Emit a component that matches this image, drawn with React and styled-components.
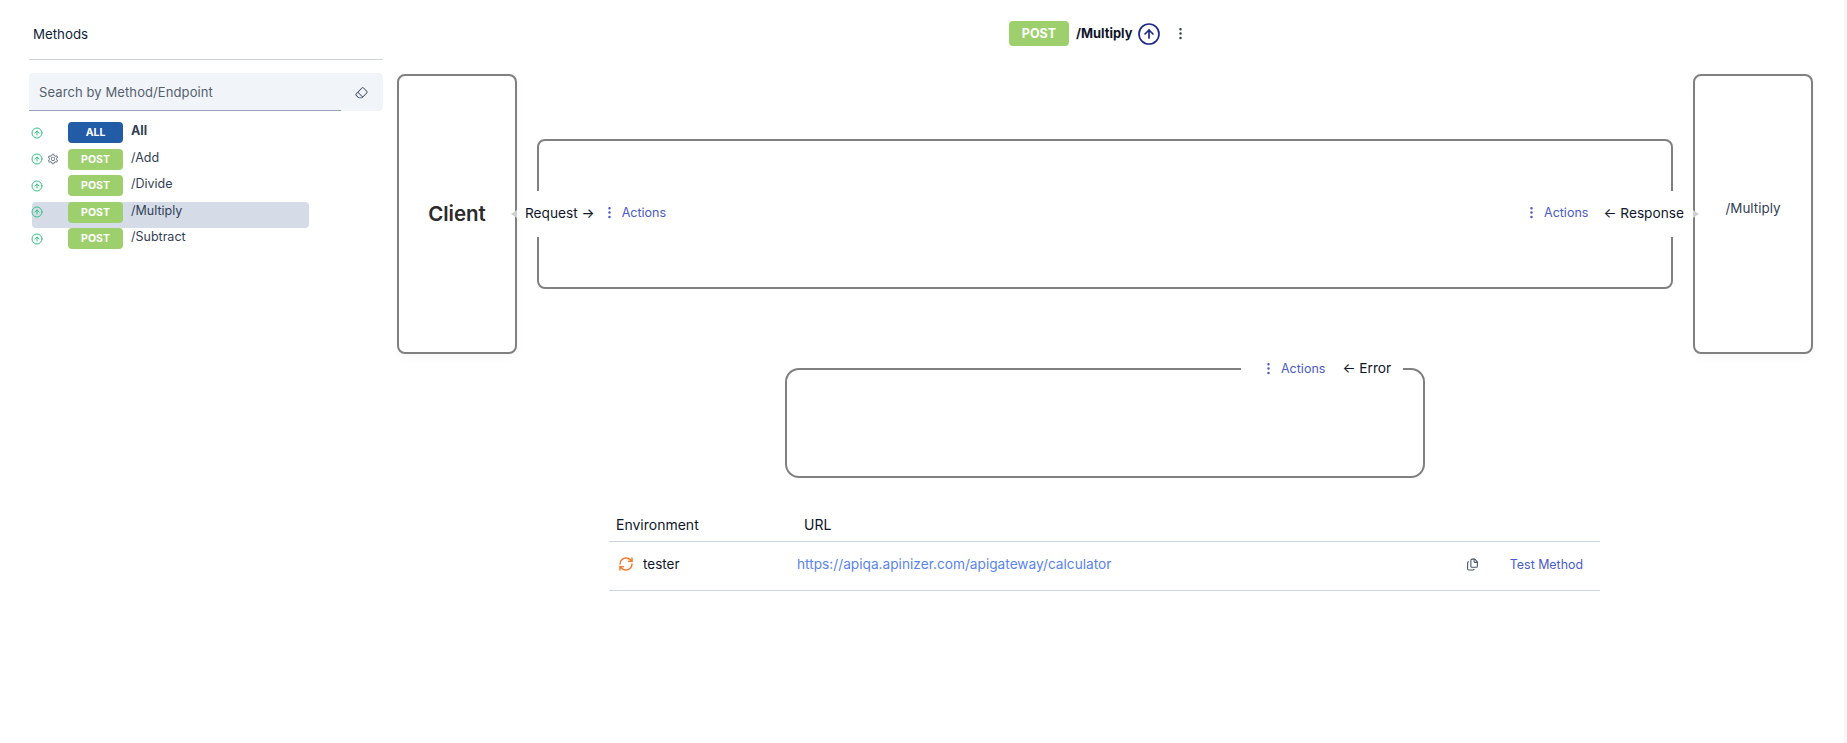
import React from "react";
import styled, { createGlobalStyle } from "styled-components";
import { CircleArrowUp, EllipsisVertical, Files, RefreshCw } from "lucide-react";
import { AiOutlineSetting } from "react-icons/ai";
import { BsEraser } from "react-icons/bs";

const Global = createGlobalStyle`
  html, body { margin: 0; padding: 0; background: #fff; }
  body { font-family: Inter, "Noto Sans", sans-serif; color: #0f172a; overflow: hidden; }
  * { box-sizing: border-box; }
`;

const Page = styled.div`
  display: flex;
  height: 743px;
  padding-left: 29px;
`;

const Sidebar = styled.aside`
  width: 354px;
  flex: none;
`;

const SidebarTitle = styled.div`
  height: 60px;
  padding: 25px 0 0 4px;
  font-size: 13.3px;
  line-height: 18px;
  color: #0f1f38;
  border-bottom: 1px solid #ccd3dd;
`;

const Search = styled.div`
  position: relative;
  height: 38px;
  margin-top: 13px;
  background: #f1f5f9;
  border-radius: 4px;
  display: flex;
  align-items: center;
  justify-content: space-between;
  padding: 0 15px 0 10px;
  font-size: 13px;
  letter-spacing: 0.1px;
  color: #55606f;
  &::after {
    content: "";
    position: absolute;
    left: 0;
    bottom: 0;
    width: 312px;
    height: 1px;
    background: #94a3b8;
  }
`;

const MethodList = styled.div`
  margin-top: 11px;
`;

const MethodRow = styled.div`
  display: flex;
  align-items: flex-start;
  height: 26.5px;
  width: 277px;
  margin-left: 3px;
  border-radius: 4px;
  background: ${(p) => (p.$active ? "#d5dce8" : "transparent")};
`;

const IconSlot = styled.span`
  display: flex;
  align-items: center;
  width: 16px;
  height: 21px;
  flex: none;
  color: ${(p) => p.$color};
  &:first-child { margin-left: -1px; }
`;

const Badge = styled.span`
  display: inline-flex;
  align-items: center;
  justify-content: center;
  width: ${(p) => p.$w}px;
  height: ${(p) => p.$h}px;
  border-radius: 4px;
  background: ${(p) => p.$bg};
  color: #fff;
  font-weight: 700;
  font-size: ${(p) => p.$size}px;
  flex: none;
`;

const RowBadge = styled(Badge)`
  margin-left: 5px;
`;

const MethodName = styled.span`
  margin-left: 8px;
  margin-top: 1px;
  font-size: 12.5px;
  line-height: 15px;
  color: #334155;
  font-weight: ${(p) => (p.$bold ? 700 : 400)};
`;

const Main = styled.main`
  width: 1416px;
  margin-left: 14px;
  flex: none;
`;

const Header = styled.header`
  height: 74px;
  display: flex;
  align-items: flex-start;
  padding: 21px 0 0 612px;
`;

const HeaderName = styled.span`
  margin-left: 7px;
  font-size: 12.9px;
  font-weight: 700;
  line-height: 25px;
  color: #0f172a;
`;

const HeaderIcon = styled.span`
  display: flex;
  height: 25px;
  align-items: center;
  margin-left: ${(p) => p.$ml}px;
  color: ${(p) => p.$color};
`;

const FlowRow = styled.div`
  display: flex;
  align-items: flex-start;
  gap: 20px;
`;

const EndBox = styled.div`
  position: relative;
  width: 120px;
  height: 280px;
  flex: none;
  border: 2px solid #808080;
  border-radius: 8px;
  display: flex;
  justify-content: center;
  align-items: ${(p) => (p.$top ? "flex-start" : "center")};
  padding-top: ${(p) => (p.$top ? "121px" : "0")};
  font-size: ${(p) => (p.$top ? "13.4px" : "20.5px")};
  font-weight: ${(p) => (p.$top ? 400 : 600)};
  line-height: 22px;
  color: ${(p) => (p.$top ? "#334155" : "#2a2a2a")};
  box-shadow: 0 4px 10px rgba(0, 0, 0, 0.03);
`;

const Pointer = styled.span`
  position: absolute;
  top: 134px;
  width: 0;
  height: 0;
  border-top: 4px solid transparent;
  border-bottom: 4px solid transparent;
  ${(p) =>
    p.$side === "left"
      ? "right: -2px; border-right: 6px solid #d0d0d0;"
      : "left: -2px; border-left: 6px solid #d0d0d0;"}
`;

const Lane = styled.div`
  position: relative;
  flex: 1;
  height: 150px;
  margin-top: 65px;
  border: 2px solid #808080;
  border-radius: 8px;
`;

const LaneLabel = styled.div`
  position: absolute;
  top: 50px;
  height: 46px;
  padding-bottom: 3px;
  background: #fff;
  display: flex;
  align-items: center;
  ${(p) => (p.$side === "left" ? "left: -14px;" : "right: -13px;")}
`;

const LabelText = styled.span`
  font-size: 13.7px;
  color: #0f172a;
  white-space: nowrap;
  margin-left: ${(p) => p.$ml || 0}px;
`;

const ActionGroup = styled.span`
  display: inline-flex;
  align-items: center;
  color: #4a5bc7;
  font-size: 12.5px;
  margin: ${(p) => p.$margin};
`;

const ActionText = styled.span`
  margin-left: 5px;
`;

const ErrorBox = styled.div`
  position: relative;
  width: 640px;
  height: 110px;
  margin: 14px 0 0 388px;
  border: 2px solid #808080;
  border-radius: 14px;
`;

const ErrorLabel = styled.div`
  position: absolute;
  top: -14px;
  left: 454px;
  width: 162px;
  height: 24px;
  background: #fff;
  display: flex;
  align-items: center;
`;

const Table = styled.div`
  width: 991px;
  margin: 22px 0 0 212px;
`;

const TableHead = styled.div`
  height: 42px;
  display: flex;
  align-items: center;
  padding: 8px 0 0 7px;
  font-size: 14px;
  color: #0f172a;
  border-bottom: 1px solid #cbd5e1;
`;

const HeadCell = styled.span`
  width: ${(p) => p.$w}px;
  flex: none;
`;

const TableRow = styled.div`
  height: 49px;
  display: flex;
  align-items: center;
  padding-bottom: 4px;
  font-size: 13.5px;
  border-bottom: 1px solid #cbd5e1;
`;

const EnvCell = styled.span`
  width: 188px;
  flex: none;
  display: flex;
  align-items: center;
  gap: 9px;
  padding-left: 9px;
  color: #0f172a;
`;

const UrlLink = styled.a`
  flex: 1;
  color: #5a84ee;
  font-size: 13.7px;
  text-decoration: none;
`;

const CopyIcon = styled.span`
  display: flex;
  color: #475569;
  margin-right: 31px;
`;

const TestLink = styled.span`
  font-size: 12.4px;
  color: #4a5bc7;
  margin-right: 17px;
`;

const ScrollEdge = styled.div`
  margin-left: auto;
  width: 3px;
  background: #f7f7f8;
`;

const methods = ["/Add", "/Divide", "/Multiply", "/Subtract"];

const Up = () => <CircleArrowUp size={12} strokeWidth={2} />;

export default function App() {
  return (
    <>
      <Global />
      <Page>
        <Sidebar>
          <SidebarTitle>Methods</SidebarTitle>
          <Search>
            <span>Search by Method/Endpoint</span>
            <BsEraser size={13} color="#334155" />
          </Search>
          <MethodList>
            <MethodRow>
              <IconSlot $color="#33c481"><Up /></IconSlot>
              <IconSlot />
              <RowBadge $w={55} $h={21} $bg="#225ba6" $size={10.5}>ALL</RowBadge>
              <MethodName $bold>All</MethodName>
            </MethodRow>
            {methods.map((m, i) => (
              <MethodRow key={m} $active={m === "/Multiply"}>
                <IconSlot $color="#33c481"><Up /></IconSlot>
                <IconSlot $color="#64748b">{i === 0 && <AiOutlineSetting size={12} />}</IconSlot>
                <RowBadge $w={55} $h={21} $bg="#9dd06c" $size={10.5}>POST</RowBadge>
                <MethodName>{m}</MethodName>
              </MethodRow>
            ))}
          </MethodList>
        </Sidebar>
        <Main>
          <Header>
            <Badge $w={60} $h={25} $bg="#9dd06c" $size={12.5}>POST</Badge>
            <HeaderName>/Multiply</HeaderName>
            <HeaderIcon $ml={5} $color="#1e2a8a"><CircleArrowUp size={24} strokeWidth={1.7} /></HeaderIcon>
            <HeaderIcon $ml={12} $color="#334155"><EllipsisVertical size={15} /></HeaderIcon>
          </Header>
          <FlowRow>
            <EndBox>
              Client
              <Pointer $side="left" />
            </EndBox>
            <Lane>
              <LaneLabel $side="left">
                <LabelText>Request →</LabelText>
                <ActionGroup $margin="0 0 0 7px">
                  <EllipsisVertical size={15} />
                  <ActionText>Actions</ActionText>
                </ActionGroup>
              </LaneLabel>
              <LaneLabel $side="right">
                <ActionGroup $margin="0 15px 0 0">
                  <EllipsisVertical size={15} />
                  <ActionText>Actions</ActionText>
                </ActionGroup>
                <LabelText>← Response</LabelText>
              </LaneLabel>
            </Lane>
            <EndBox $top>
              /Multiply
              <Pointer $side="right" />
            </EndBox>
          </FlowRow>
          <ErrorBox>
            <ErrorLabel>
              <ActionGroup $margin="0 0 0 20px">
                <EllipsisVertical size={15} />
                <ActionText>Actions</ActionText>
              </ActionGroup>
              <LabelText $ml={17}>← Error</LabelText>
            </ErrorLabel>
          </ErrorBox>
          <Table>
            <TableHead>
              <HeadCell $w={188}>Environment</HeadCell>
              <HeadCell $w={100}>URL</HeadCell>
            </TableHead>
            <TableRow>
              <EnvCell>
                <RefreshCw size={16} color="#f5792a" strokeWidth={2.2} />
                tester
              </EnvCell>
              <UrlLink>https://apiqa.apinizer.com/apigateway/calculator</UrlLink>
              <CopyIcon><Files size={13} /></CopyIcon>
              <TestLink>Test Method</TestLink>
            </TableRow>
          </Table>
        </Main>
        <ScrollEdge />
      </Page>
    </>
  );
}
